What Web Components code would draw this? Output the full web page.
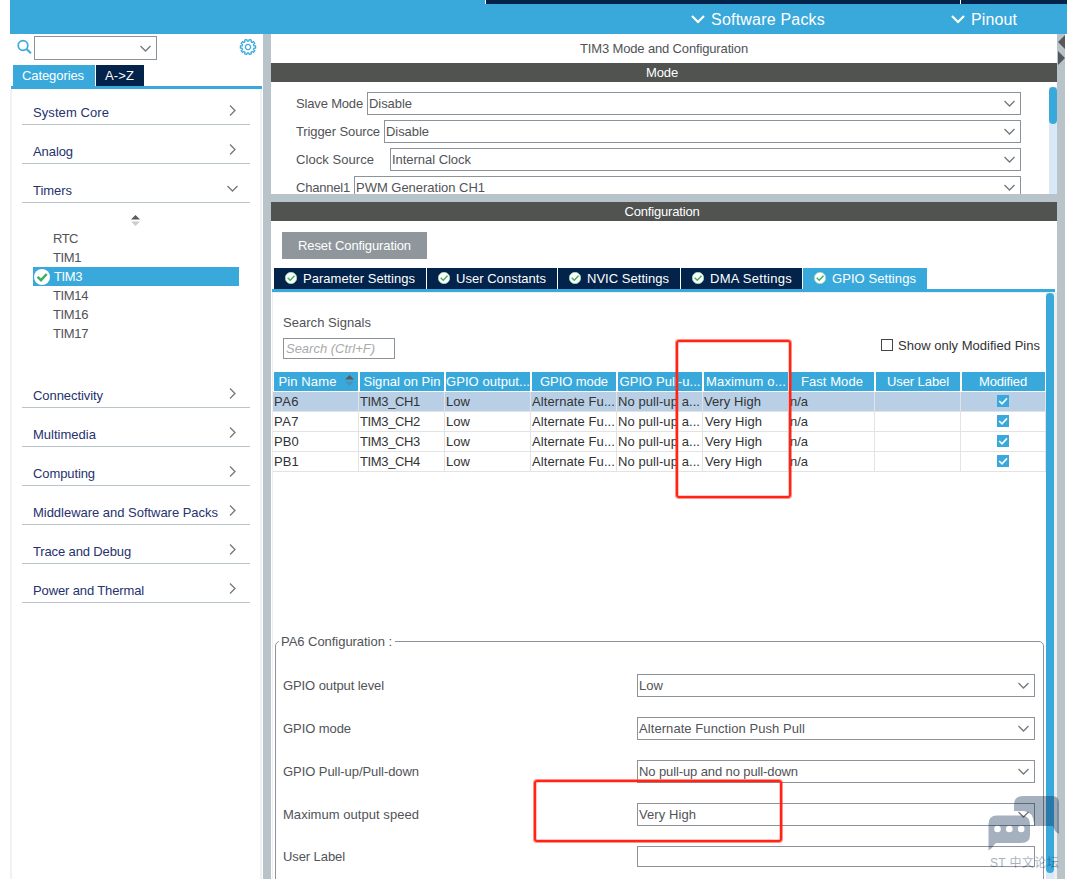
<!DOCTYPE html>
<html lang="en">
<head>
<meta charset="utf-8">
<title>TIM3 Mode and Configuration</title>
<style>
html,body{margin:0;padding:0;background:#fff;overflow:hidden}
body{width:1067px;height:879px;font:13px/19px "Liberation Sans",Arial,"Noto Sans CJK SC",sans-serif;color:#515357}
</style>
</head>
<body>
<cube-app></cube-app>
<script>
const define = (name, html, setup) => customElements.define(name, class extends HTMLElement {
  connectedCallback() {
    if (this.shadowRoot) return;
    const root = this.attachShadow({mode: 'open'});
    root.innerHTML = typeof html === 'function' ? html(this) : html;
    if (setup) setup(this, root);
  }
});

/* Label whose tracking is spread to fill a given advance width */
define('fit-text', '<style>:host{display:inline-block;white-space:pre;flex:none}span{display:inline-block}</style><span><slot></slot></span>', (el, root) => {
  const w = +el.getAttribute('w'), s = root.querySelector('span');
  if (!w) return;
  const n = el.textContent.length;
  s.style.letterSpacing = ((w - s.getBoundingClientRect().width) / n) + 'px';
  el.style.width = w + 'px';
});

define('chevron-icon', el => {
  const d = el.getAttribute('dir') === 'right' ? 'M4 1.5 9 6.5 4 11.5' : 'M1.5 4 6.5 9 11.5 4';
  return `<style>:host{display:block;flex:none;width:13px;height:13px}svg{display:block}</style>
  <svg width="13" height="13" fill="none" stroke="currentColor" stroke-width="1.3"><path d="${d}"/></svg>`;
});

define('status-check', el => {
  const s = el.getAttribute('size') || 12;
  const big = s > 13;
  return `<style>:host{display:block;flex:none;width:${s}px;height:${s}px}svg{display:block}</style>
  <svg width="${s}" height="${s}" viewBox="0 0 16 16"><circle cx="8" cy="8" r="${big ? 8 : 7.6}" fill="#fff" ${big ? '' : 'stroke="#a4dcb4" stroke-width="1"'}/>
  <path d="M3.6 7.8 7 11.1 12.7 5" fill="none" stroke="#3fae62" stroke-width="${big ? 2.5 : 1.9}"/></svg>`;
});

define('sort-arrows', `<style>:host{display:block;width:9px;height:11px}svg{display:block}</style>
<svg width="9" height="11"><path d="M4.5 0 9 4.5H0z" fill="#5b5b5b"/><path d="M4.5 11 9 6.5H0z" fill="var(--low,#ccc)"/></svg>`);

define('app-header', `<style>
:host{display:grid;grid-template-rows:4px 30px;height:34px;margin-left:10px;background:#39a9dc;color:#fff;font-size:16px}
.strip{display:flex;margin-left:475px;gap:1px;background:#fff;padding-left:1px}
.strip i{background:#03234b;height:4px;width:474px}.strip i+i{width:auto;flex:1}
.menu{display:flex;align-items:center}
.item{display:flex;align-items:center;gap:6px;margin-left:681px;height:30px}
.item+.item{margin-left:126px}
</style>
<div class="strip"><i></i><i></i></div>
<div class="menu">
<div class="item"><svg width="14" height="10" fill="none" stroke="#fff" stroke-width="2.2"><path d="M1 2 7 8 13 2"/></svg><fit-text w="114">Software Packs</fit-text></div>
<div class="item"><svg width="14" height="10" fill="none" stroke="#fff" stroke-width="2.2"><path d="M1 2 7 8 13 2"/></svg><fit-text w="46">Pinout</fit-text></div>
</div>`);

define('category-item', el => `<style>
:host{display:flex;box-sizing:border-box;height:39px;margin:0 10px;border-bottom:1px solid #b9c4ca;padding:17px 11px 0 11px;justify-content:space-between;color:#26326e}
chevron-icon{color:#777;margin-top:1px}
</style><fit-text w="${el.getAttribute('w')}">${el.getAttribute('label')}</fit-text><chevron-icon dir="${el.hasAttribute('open') ? 'down' : 'right'}"></chevron-icon>`);

define('peripheral-item', el => `<style>
:host{display:flex;align-items:center;box-sizing:border-box;height:19px;margin:0 21px;padding-left:20px}
:host([active]){background:#39a9dc;color:#fff;padding-left:1px}
status-check{margin-right:4px}
</style>${el.hasAttribute('active') ? '<status-check size="16"></status-check>' : ''}<fit-text w="${el.getAttribute('w')}">${el.getAttribute('label')}</fit-text>`);

define('category-panel', `<style>
:host{display:flex;flex-direction:column;width:253px;margin-left:10px;flex:none}
.search{display:flex;height:31px;padding:2px 0 0 7px;box-sizing:border-box}
.search>svg{margin-top:3px;flex:none}
.search>.gear{margin-top:2px}
.box{width:123px;height:24px;box-sizing:border-box;border:1px solid #8c939b;margin:0 82px 0 2px;display:flex;align-items:center;justify-content:flex-end;padding-right:4px;color:#777}
.tabs{display:flex;gap:1px;height:21px;color:#fff;border-bottom:3px solid #39a9dc;margin:0 1px 0 1px;padding-left:2px}
.tab{background:#39a9dc;width:82px;display:flex;align-items:center;box-sizing:border-box;padding-left:9px}
.tab+.tab{background:#03234b;width:48px}
.body{flex:1;border:solid #f1f1f1;border-width:0 2px;box-sizing:border-box;margin-right:1px}
category-item{margin:0 10px}
category-item:first-child{margin-top:-3px}
.sub{height:166px;padding-top:12px;box-sizing:border-box}
sort-arrows{margin:0 0 3px 119px}
</style>
<div class="search">
<svg width="15" height="16" fill="none" stroke="#39a9dc"><circle cx="6" cy="6.5" r="4.8" stroke-width="1.7"/><path d="m9.6 10 4.3 4.3" stroke-width="2"/></svg>
<div class="box"><chevron-icon></chevron-icon></div>
<svg class="gear" width="18" height="18" viewBox="-9 -9 18 18" fill="none" stroke="#39a9dc"></svg>
</div>
<div class="tabs"><div class="tab"><fit-text w="62">Categories</fit-text></div><div class="tab"><fit-text w="29">A-&gt;Z</fit-text></div></div>
<div class="body">
<category-item w="76" label="System Core"></category-item>
<category-item w="40" label="Analog"></category-item>
<category-item w="39" label="Timers" open></category-item>
<div class="sub"><sort-arrows></sort-arrows>
<peripheral-item w="25" label="RTC"></peripheral-item>
<peripheral-item w="28" label="TIM1"></peripheral-item>
<peripheral-item w="28" label="TIM3" active></peripheral-item>
<peripheral-item w="35" label="TIM14"></peripheral-item>
<peripheral-item w="35" label="TIM16"></peripheral-item>
<peripheral-item w="35" label="TIM17"></peripheral-item></div>
<category-item w="70" label="Connectivity"></category-item>
<category-item w="63" label="Multimedia"></category-item>
<category-item w="62" label="Computing"></category-item>
<category-item w="185" label="Middleware and Software Packs"></category-item>
<category-item w="98" label="Trace and Debug"></category-item>
<category-item w="111" label="Power and Thermal"></category-item>
</div>`, (el, root) => {
  const pts = [];
  for (let i = 0; i < 10; i++) {
    const a = i * Math.PI / 5, p = (r, t) => (r * Math.cos(a + t)).toFixed(2) + ' ' + (r * Math.sin(a + t)).toFixed(2);
    pts.push(p(6, -.2), p(7.7, -.14), p(7.7, .14), p(6, .2));
  }
  root.querySelector('.gear').innerHTML = `<path d="M${pts.join('L')}Z" stroke-width="1.2"/><circle r="2.6" stroke-width="1.3"/>`;
});

define('select-box', el => `<style>
:host{display:flex;align-items:center;justify-content:space-between;box-sizing:border-box;height:23px;border:1px solid #8c939b;padding:0 4px 0 1px;background:#fff}
chevron-icon{color:#777}
</style><fit-text w="${el.getAttribute('w')}">${el.getAttribute('value')}</fit-text><chevron-icon></chevron-icon>`);

define('title-bar', `<style>:host{display:flex;justify-content:center;align-items:center;height:19px;background:#515351;color:#fff;padding-right:4px}</style><slot></slot>`);

define('mode-panel', `<style>
:host{display:flex;flex-direction:column;height:160px;overflow:hidden}
.title{height:29px;display:flex;justify-content:center;align-items:center;flex:none}
title-bar{flex:none}
.area{display:flex;flex:1;min-height:0}
.rows{flex:1;padding:10px 28px 0 25px;display:flex;flex-direction:column;gap:5px;overflow:hidden}
.row{display:flex;align-items:center;flex:none}
select-box{flex:1}
.track{width:8px;background:#d9e8f6;margin-top:5px}
.track i{display:block;height:37px;background:#39a9dc;border-radius:4px}
</style>
<div class="title"><fit-text w="168">TIM3 Mode and Configuration</fit-text></div>
<title-bar><fit-text w="32">Mode</fit-text></title-bar>
<div class="area"><div class="rows">
<div class="row"><fit-text w="67" style="margin-right:4px">Slave Mode</fit-text><select-box w="43" value="Disable"></select-box></div>
<div class="row"><fit-text w="84" style="margin-right:4px">Trigger Source</fit-text><select-box w="43" value="Disable"></select-box></div>
<div class="row"><fit-text w="78" style="margin-right:16px">Clock Source</fit-text><select-box w="79" value="Internal Clock"></select-box></div>
<div class="row"><fit-text w="54" style="margin-right:4px">Channel1</fit-text><select-box w="129" value="PWM Generation CH1"></select-box></div>
</div><div class="track"><i></i></div></div>`);

define('settings-tab', el => `<style>
:host{display:flex;align-items:center;box-sizing:border-box;height:21px;background:#03234b;color:#fff;padding-left:11px}
:host([active]){background:#39a9dc}
status-check{margin-right:6px;margin-top:-1px}
</style><status-check size="12"></status-check><fit-text w="${el.getAttribute('w')}">${el.getAttribute('label')}</fit-text>`);

define('pin-table', `<style>
:host{display:block}
.r{display:grid;grid-template-columns:repeat(8,86px) 85px;height:20px;color:#333}
.r.h{color:#fff}
.c{box-sizing:border-box;border-right:1px solid #e3e3e3;border-bottom:1px solid #e3e3e3;padding-left:1px;display:flex;align-items:center;overflow:hidden}
.h .c{background:#39a9dc;border:solid #fff;border-width:0 1px 1px;justify-content:center;padding:0}
.sel .c{background:#b8cfe6}
.c.m{justify-content:center;padding:0 1px 1px 0}
.h .c:last-child{padding-right:1px}
sort-arrows{--low:#4b93b8;margin:-3px 0 0 8px}
</style><div id="t"></div>`, (el, root) => {
  const f = (t, w) => `<fit-text w="${w}">${t}</fit-text>`;
  const heads = [['Pin Name', 58], ['Signal on Pin', 77], ['GPIO output...', 84], ['GPIO mode', 68], ['GPIO Pull-u...', 81], ['Maximum o...', 80], ['Fast Mode', 62], ['User Label', 62], ['Modified', 48]];
  let out = '<div class="r h">' + heads.map(([t, w], i) => `<div class="c">${f(t, w)}${i ? '' : '<sort-arrows></sort-arrows>'}</div>`).join('') + '</div>';
  [['PA6', 25], ['PA7', 25], ['PB0', 25], ['PB1', 25]].forEach(([pin, w], i) => {
    const cells = [f(pin, w), f('TIM3_CH' + (i + 1), 60), f('Low', 24), f('Alternate Fu...', 83), f('No pull-up a...', 82), f('Very High', 57), f('n/a', 18), '', '<svg width="12" height="12"><path d="M0 0h12v12H0z" fill="#39a9dc"/><path d="M2.2 6 5 8.8 10 3.4" fill="none" stroke="#fff" stroke-width="1.6"/></svg>'];
    out += `<div class="r${i ? '' : ' sel'}">` + cells.map((c, j) => `<div class="c${j === 8 ? ' m' : ''}"${j === 5 && i ? ' style="padding-left:2px"' : ''}>${c}</div>`).join('') + '</div>';
  });
  root.getElementById('t').innerHTML = out;
});

define('pin-config', `<style>
:host{display:block}
fieldset{box-sizing:border-box;width:769px;height:260px;margin:0 0 0 2px;border:1px solid #8c939b;border-radius:5px;padding:0 8px 0 7px;min-width:0}
legend{padding:0 3px 0 2px;margin-left:-4px}
.g{display:grid;grid-template-columns:354px 398px;grid-auto-rows:23px;row-gap:20px;align-items:center;padding-top:23px}
.in{height:21px;box-sizing:border-box;border:1px solid #8c939b;align-self:start}
</style>
<fieldset><legend><fit-text w="111">PA6 Configuration :</fit-text></legend><div class="g">
<fit-text w="101">GPIO output level</fit-text><select-box w="24" value="Low"></select-box>
<fit-text w="68">GPIO mode</fit-text><select-box w="166" value="Alternate Function Push Pull"></select-box>
<fit-text w="136">GPIO Pull-up/Pull-down</fit-text><select-box w="159" value="No pull-up and no pull-down"></select-box>
<fit-text w="136">Maximum output speed</fit-text><select-box w="57" value="Very High"></select-box>
<fit-text w="62" style="margin-top:-2px">User Label</fit-text><div class="in"></div>
</div></fieldset>`);

define('config-panel', `<style>
:host{display:flex;flex-direction:column;height:677px;margin-top:8px;overflow:hidden;background:#fff}
.btn{width:145px;height:27px;margin:11px 0 9px 11px;background:#8f979d;color:#fff;display:flex;align-items:center;justify-content:center;flex:none}
.tabs{display:flex;gap:1px;margin:0 2px 0 1px;padding-left:2px;border-bottom:3px solid #39a9dc;flex:none}
.body{display:flex;flex:1;min-height:0;border:solid #eee;border-width:1px 3px 0 1px;margin-left:1px}
.content{width:773px;flex:none;overflow:hidden}
.head{display:flex;justify-content:space-between;height:79px;box-sizing:border-box;padding:20px 6px 0 10px}
.s{width:112px;height:21px;box-sizing:border-box;border:1px solid #8c939b;margin-top:6px;padding-left:2px;font-style:italic;color:#aaa;display:flex;align-items:center}
.only{display:flex;align-items:center;align-self:flex-start;margin-top:23px;color:#333;gap:5px}
.only i{width:12px;height:12px;box-sizing:border-box;border:1px solid #444;margin-top:-1px}
pin-config{margin-top:160px}
.track{width:8px;background:#d9e8f6;flex:none}
.track i{display:block;height:580px;background:#39a9dc;border-radius:4px}
</style>
<title-bar><fit-text w="75">Configuration</fit-text></title-bar>
<div class="btn"><fit-text w="113">Reset Configuration</fit-text></div>
<div class="tabs">
<settings-tab style="width:152px" w="112" label="Parameter Settings"></settings-tab>
<settings-tab style="width:130px" w="90" label="User Constants"></settings-tab>
<settings-tab style="width:122px" w="82" label="NVIC Settings"></settings-tab>
<settings-tab style="width:121px" w="82" label="DMA Settings"></settings-tab>
<settings-tab style="width:124px" w="84" label="GPIO Settings" active></settings-tab>
</div>
<div class="body"><div class="content">
<div class="head"><div><fit-text w="88">Search Signals</fit-text><div class="s"><fit-text w="89">Search (Ctrl+F)</fit-text></div></div>
<div class="only"><i></i><fit-text w="142">Show only Modified Pins</fit-text></div></div>
<pin-table></pin-table><pin-config></pin-config>
</div><div class="track"><i></i></div></div>`);

define('red-frame', '<style>:host{position:absolute;box-sizing:border-box;border:2px solid #ff2414;border-radius:3px;box-shadow:0 0 0 1px rgba(255,36,20,.5),inset 0 0 0 .5px rgba(255,36,20,.5)}</style>');

define('forum-mark', `<style>
:host{position:absolute;left:986px;top:794px;width:76px;height:78px;color:#03234b;opacity:.35}
svg{display:block}
div{font-size:12px;line-height:18px;margin:-2px 0 0 4px}
</style>
<svg width="76" height="62" fill="currentColor"><path d="M28 17V11Q28 2 37 2H66Q73 2 73 9V40Q68 37 67 32H48V29Q47 18 38 17Z"/>
<path fill-rule="evenodd" d="M2.500 56.500V30Q2.500 21.500 11 21.500H35Q44 21.500 44 30V41Q44 49 35 49H11Q9 49 8 51 6 55 2.500 56.500ZM11.500 31.700a3.300 3.300 0 1 0 0 6.600 3.300 3.300 0 0 0 0-6.600M23.300 31.700a3.300 3.300 0 1 0 0 6.600 3.300 3.300 0 0 0 0-6.600M35.200 31.700a3.300 3.300 0 1 0 0 6.600 3.300 3.300 0 0 0 0-6.600"/></svg>
<div><fit-text w="69">ST 中文论坛</fit-text></div>`);

define('cube-app', `<style>
:host{display:block;position:relative;width:1067px;height:879px;overflow:hidden}
.main{display:flex;height:845px}
.right{flex:none;width:786px;border:solid #b9c4ca;border-width:0 8px;background:linear-gradient(#b9c4ca,#b9c4ca) 0 160px/100% 8px no-repeat}
.collapse{position:absolute;left:1058px;top:34px}
</style>
<app-header></app-header>
<div class="main"><category-panel></category-panel><div class="right"><mode-panel></mode-panel><config-panel></config-panel></div></div>
<svg class="collapse" width="7" height="32" fill="#55585c"><path d="M7 1V15L0 8ZM0 17V31L7 24Z"/></svg>
<red-frame style="left:676px;top:340px;width:115px;height:158px"></red-frame>
<red-frame style="left:534px;top:780px;width:248px;height:62px"></red-frame>
<forum-mark></forum-mark>`);
</script>
</body>
</html>
